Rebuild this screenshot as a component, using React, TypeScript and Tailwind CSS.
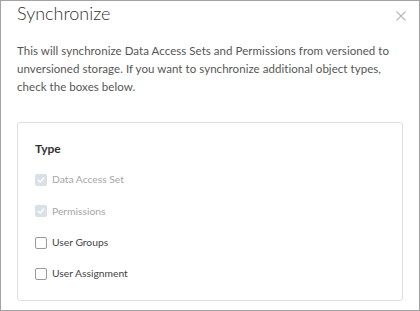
import React from "react";

type Item = { label: string; checked: boolean; disabled: boolean };

const items: Item[] = [
  { label: "Data Access Set", checked: true, disabled: true },
  { label: "Permissions", checked: true, disabled: true },
  { label: "User Groups", checked: false, disabled: false },
  { label: "User Assignment", checked: false, disabled: false },
];

function Box({ checked }: { checked: boolean }) {
  if (checked) {
    return (
      <span className="flex h-[12px] w-[12px] items-center justify-center rounded-[2px] bg-[#d8e0e8]">
        <svg width="8" height="8" viewBox="0 0 8 8" fill="none">
          <path d="M1.3 4.2 L3.2 6 L6.8 2" stroke="#fff" strokeWidth="1.4" strokeLinecap="round" strokeLinejoin="round" />
        </svg>
      </span>
    );
  }
  return <span className="h-[12px] w-[12px] rounded-[2px] border border-[#9a9a9a] bg-white" />;
}

export default function App() {
  return (
    <div
      className="h-[311px] w-[420px] border border-[#a3a3a3] bg-white"
      style={{ fontFamily: "Lato, 'Liberation Sans', sans-serif" }}
    >
      <div className="flex items-start justify-between pl-[16px] pr-[12px]">
        <h1 className="text-[18px] font-light leading-[24px] text-[#313131]">Synchronize</h1>
        <svg width="12" height="12" viewBox="0 0 12 12" className="mt-[9px]">
          <path d="M1.5 1.5 L10.5 10.5 M10.5 1.5 L1.5 10.5" stroke="#b4b9bf" strokeWidth="1.1" />
        </svg>
      </div>
      <p className="mt-[16.5px] pl-[16px] pr-[16px] text-[11.5px] leading-[18px] tracking-[0.05px] text-[#565656]">
        This will synchronize Data Access Sets and Permissions from versioned to unversioned storage. If you
        want to synchronize additional object types, check the boxes below.
      </p>
      <div className="mx-[16px] mt-[26.5px] h-[179px] rounded-[3px] border border-[#dedede] px-[17px] pt-[18px]">
        <div className="text-[12px] font-bold leading-[16px] text-[#333]">Type</div>
        <div className="mt-[15px] flex flex-col gap-[15.3px]">
          {items.map(it => (
            <label key={it.label} className="flex h-[16px] items-center gap-[5px]">
              <Box checked={it.checked} />
              <span className={it.disabled ? "text-[10.3px] text-[#a6a6a6]" : "text-[10.3px] text-[#444]"}>
                {it.label}
              </span>
            </label>
          ))}
        </div>
      </div>
    </div>
  );
}
